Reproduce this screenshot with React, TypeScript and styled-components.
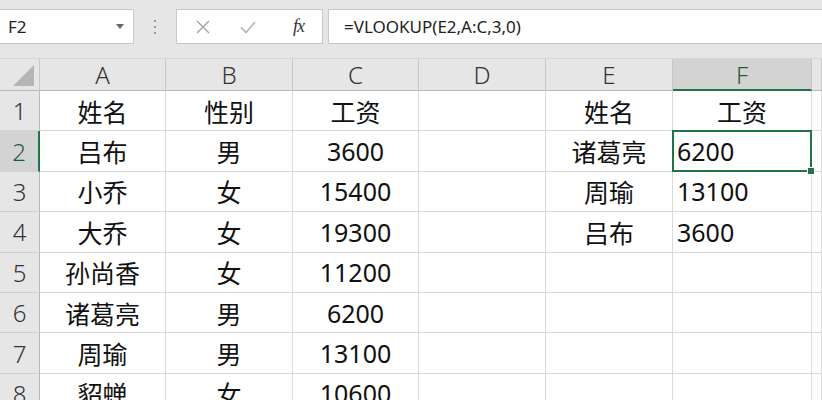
import React from 'react';
import styled, { createGlobalStyle } from 'styled-components';

const GlobalStyle = createGlobalStyle`
  html, body {
    margin: 0;
    padding: 0;
    background: #e6e6e6;
    overflow: hidden;
  }
  body {
    font-family: "Noto Sans", "Noto Sans CJK SC", sans-serif;
    color: #222;
  }
`;

const Page = styled.div`
  width: 822px;
  height: 400px;
  overflow: hidden;
  background: #e6e6e6;
`;

const Toolbar = styled.div`
  height: 59px;
  box-sizing: border-box;
  padding-top: 9px;
  display: flex;
  align-items: flex-start;
  border-bottom: 1px solid #d6d6d6;
`;

const NameBox = styled.div`
  width: 134px;
  height: 35px;
  box-sizing: border-box;
  background: #fff;
  border: 1px solid #c8c8c8;
  border-left: none;
  display: flex;
  align-items: center;
  justify-content: space-between;
  padding: 0 9px 0 8px;
  font-size: 17px;
  color: #222;
`;

const Caret = styled.span`
  width: 0;
  height: 0;
  border-left: 4px solid transparent;
  border-right: 4px solid transparent;
  border-top: 5px solid #666;
`;

const Grip = styled.div`
  width: 42px;
  height: 35px;
  display: flex;
  flex-direction: column;
  align-items: center;
  justify-content: center;
  gap: 4px;
`;

const Dot = styled.span`
  width: 2px;
  height: 2px;
  background: #999;
`;

const IconBox = styled.div`
  width: 147px;
  height: 35px;
  box-sizing: border-box;
  background: #fff;
  border: 1px solid #c8c8c8;
  display: flex;
  align-items: center;
  justify-content: space-around;
  padding: 0 4px;
`;

const Fx = styled.span`
  font-family: "Liberation Serif", serif;
  font-style: italic;
  font-size: 18px;
  color: #333;
  letter-spacing: -1px;
  margin-left: 8px;
`;

const FormulaBox = styled.div`
  flex: 1;
  margin-left: 5px;
  height: 35px;
  box-sizing: border-box;
  background: #fff;
  border: 1px solid #c8c8c8;
  border-right: none;
  display: flex;
  align-items: center;
  padding-left: 15px;
  font-size: 17px;
  color: #222;
`;

const Sheet = styled.div`
  display: grid;
  grid-template-columns: 40px 126px 127px 126px 127px 127px 139px 1fr;
  grid-template-rows: 32px repeat(8, 40.4px);
`;

const Corner = styled.div`
  background: #e6e6e6;
  border-right: 1px solid #c8c8c8;
  border-bottom: 1px solid #b8b8b8;
  position: relative;
  &::after {
    content: '';
    position: absolute;
    right: 5px;
    bottom: 4px;
    width: 0;
    height: 0;
    border-left: 21px solid transparent;
    border-bottom: 21px solid #b5b5b5;
  }
`;

const ColHead = styled.div<{ $active?: boolean }>`
  background: ${p => (p.$active ? '#d3d3d3' : '#e6e6e6')};
  border-right: 1px solid #c8c8c8;
  border-bottom: ${p => (p.$active ? '2px solid #217346' : '1px solid #b8b8b8')};
  display: flex;
  align-items: center;
  justify-content: center;
  font-size: 24px;
  color: ${p => (p.$active ? '#1e5c3a' : '#333')};
  font-weight: 300;
`;

const RowHead = styled.div<{ $active?: boolean }>`
  background: ${p => (p.$active ? '#d3d3d3' : '#e6e6e6')};
  border-right: ${p => (p.$active ? '2px solid #217346' : '1px solid #b8b8b8')};
  border-bottom: 1px solid #cfcfcf;
  display: flex;
  align-items: center;
  justify-content: center;
  font-size: 24px;
  color: ${p => (p.$active ? '#1e5c3a' : '#333')};
  font-weight: 300;
`;

const Cell = styled.div<{ $align?: 'left' | 'center' }>`
  background: #fff;
  border-right: 1px solid #d9d9d9;
  border-bottom: 1px solid #d9d9d9;
  display: flex;
  align-items: center;
  justify-content: ${p => (p.$align === 'left' ? 'flex-start' : 'center')};
  padding-left: ${p => (p.$align === 'left' ? '4px' : '0')};
  font-size: 25px;
  color: #111;
  white-space: nowrap;
  position: relative;
`;

const Selected = styled.div`
  position: absolute;
  inset: -1px -1px -1px -1px;
  border: 2px solid #217346;
  pointer-events: none;
  z-index: 2;
  &::after {
    content: '';
    position: absolute;
    right: -5px;
    bottom: -5px;
    width: 6px;
    height: 6px;
    background: #217346;
    border: 1px solid #fff;
  }
`;

const cols = ['A', 'B', 'C', 'D', 'E', 'F', ''];

const rows: string[][] = [
  ['姓名', '性别', '工资', '', '姓名', '工资'],
  ['吕布', '男', '3600', '', '诸葛亮', '6200'],
  ['小乔', '女', '15400', '', '周瑜', '13100'],
  ['大乔', '女', '19300', '', '吕布', '3600'],
  ['孙尚香', '女', '11200', '', '', ''],
  ['诸葛亮', '男', '6200', '', '', ''],
  ['周瑜', '男', '13100', '', '', ''],
  ['貂蝉', '女', '10600', '', '', ''],
];

export default function App() {
  return (
    <Page>
      <GlobalStyle />
      <Toolbar>
        <NameBox>
          F2
          <Caret />
        </NameBox>
        <Grip>
          <Dot />
          <Dot />
          <Dot />
        </Grip>
        <IconBox>
          <svg width="16" height="16" viewBox="0 0 16 16">
            <path d="M2 2 L14 14 M14 2 L2 14" stroke="#a0a0a0" strokeWidth="1.3" fill="none" />
          </svg>
          <svg width="18" height="16" viewBox="0 0 18 16">
            <path d="M2 8.5 L7 13.5 L16 3" stroke="#b8b8b8" strokeWidth="1.8" fill="none" />
          </svg>
          <Fx>fx</Fx>
        </IconBox>
        <FormulaBox>=VLOOKUP(E2,A:C,3,0)</FormulaBox>
      </Toolbar>
      <Sheet>
        <Corner />
        {cols.map((c, i) => (
          <ColHead key={i} $active={c === 'F'}>
            {c}
          </ColHead>
        ))}
        {rows.map((r, ri) => (
          <React.Fragment key={ri}>
            <RowHead $active={ri === 1}>{ri + 1}</RowHead>
            {r.map((v, ci) => (
              <Cell key={ci} $align={ci === 5 && ri > 0 ? 'left' : 'center'}>
                {v}
                {ri === 1 && ci === 5 && <Selected />}
              </Cell>
            ))}
            <Cell />
          </React.Fragment>
        ))}
      </Sheet>
    </Page>
  );
}
